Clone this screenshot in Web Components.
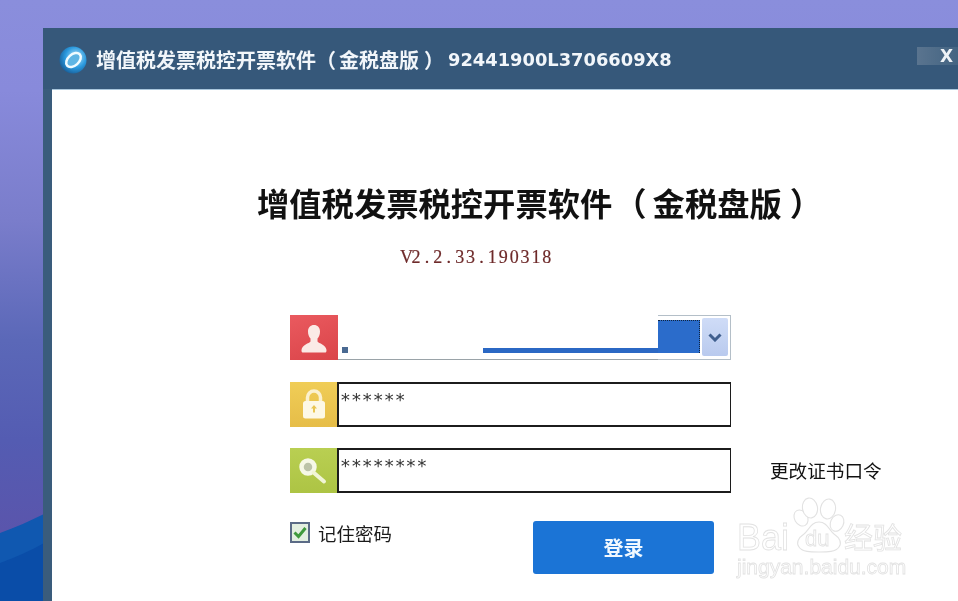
<!DOCTYPE html>
<html lang="zh">
<head>
<meta charset="utf-8">
<title>增值税发票税控开票软件</title>
<style>
  html, body { margin: 0; padding: 0; height: 100%; overflow: hidden; }
  body { font-family: "Noto Sans CJK SC", "Liberation Sans", sans-serif; }
</style>
</head>
<body>
<tax-desktop>
  <tax-window>
    <title-bar slot="bar"></title-bar>
    <login-panel>
      <login-field tone="red" kind="combo">
        <svg slot="icon" width="48" height="45" viewBox="0 0 48 45"><path fill="#fbeae6" d="M24 10c-3.500 0-6 2.600-6 6.500 0 3 1 5.500 2.500 7v3c-1.200 2-8.500 3-9 8.500-.1 1 .3 2.500 1 2.500h23c.7 0 1.100-1.500 1-2.500-.5-5.500-7.800-6.500-9-8.500v-3c1.500-1.500 2.500-4 2.500-7 0-3.900-2.500-6.500-6-6.500z"/></svg>
      </login-field>
      <login-field tone="yellow" value="******">
        <svg slot="icon" width="48" height="45" viewBox="0 0 48 45"><path fill="none" stroke="#fbf1cf" stroke-width="3.500" d="M17.500 20v-4.500a6.500 6.500 0 0 1 13 0V20"/><rect x="13" y="19" width="22" height="17.500" rx="2.500" fill="#fdf8e6"/><path fill="#e9c552" d="M24 23l3 3.600h-2v4h-2v-4h-2z"/></svg>
      </login-field>
      <login-field tone="green" value="********">
        <svg slot="icon" width="48" height="45" viewBox="0 0 48 45"><circle cx="18" cy="19" r="6.500" fill="#bcc3a8" stroke="#f6f8e6" stroke-width="4.500"/><path stroke="#f1f5d6" stroke-width="4" stroke-linecap="round" d="M23.500 24.500L34 33.500"/></svg>
        <span slot="after">更改证书口令</span>
      </login-field>
      <login-actions></login-actions>
    </login-panel>
    <baidu-mark slot="mark"></baidu-mark>
  </tax-window>
</tax-desktop>

<script>
class TaxDesktop extends HTMLElement {
  constructor() {
    super();
    this.attachShadow({ mode: 'open' });
    this.shadowRoot.innerHTML = `
      <style>
        :host {
          display: block;
          position: relative;
          width: 958px;
          height: 601px;
          overflow: hidden;
          background: linear-gradient(180deg, #8a8edc 0, #888adb 90px, #7a7dcb 220px, #5b68b8 340px, #545cb2 440px, #5a55ac 530px);
        }
        svg { position: absolute; left: 0; bottom: 0; }
      </style>
      <svg width="60" height="100" viewBox="0 0 60 100"><path fill="#1058b0" d="M0 32C16 26 30 20 44 13V100H0z"/><path fill="#0a4da8" d="M0 62C16 56 30 50 44 42V100H0z"/></svg>
      <slot></slot>
    `;
  }
}

class TaxWindow extends HTMLElement {
  constructor() {
    super();
    this.attachShadow({ mode: 'open' });
    this.shadowRoot.innerHTML = `
      <style>
        :host {
          display: block;
          position: absolute;
          left: 43px;
          top: 28px;
          width: 915px;
          height: 573px;
          box-sizing: border-box;
          border-left: 9px solid #3a5c7c;
          background: #fff;
        }
      </style>
      <slot name="bar"></slot>
      <slot></slot>
      <slot name="mark"></slot>
    `;
  }
}

class TitleBar extends HTMLElement {
  constructor() {
    super();
    this.attachShadow({ mode: 'open' });
    this.shadowRoot.innerHTML = `
      <style>
        :host {
          display: flex;
          align-items: center;
          height: 61px;
          margin-left: -9px;
          padding: 2px 0 0 15px;
          box-sizing: border-box;
          background: #36587a;
          color: #f2f6fa;
          font: 700 20px "Noto Sans CJK SC", sans-serif;
          filter: blur(.35px);
        }
        svg { flex: none; }
        .name { margin-left: 8px; white-space: nowrap; }
        .open { margin-right: 3px; }
        .shut { margin-left: 5px; }
        .code {
          margin-left: 4px;
          font: bold 17.850px "DejaVu Sans", sans-serif;
          white-space: nowrap;
        }
        .close {
          margin-left: auto;
          align-self: flex-start;
          margin-top: 17px;
          width: 41px;
          height: 18px;
          background: linear-gradient(90deg, #5a748f, #436482);
          color: #eef3f7;
          font: bold 17px/18px "DejaVu Sans", sans-serif;
          text-align: right;
          padding-right: 5px;
          box-sizing: border-box;
        }
      </style>
      <svg width="30" height="30" viewBox="0 0 30 30">
        <defs>
          <radialGradient id="orb" cx=".6" cy=".4" r=".7">
            <stop offset="0" stop-color="#bfe8fa"/>
            <stop offset=".55" stop-color="#2b9adf"/>
            <stop offset="1" stop-color="#14538c"/>
          </radialGradient>
        </defs>
        <circle cx="15" cy="15" r="13.500" fill="url(#orb)"/>
        <ellipse cx="15.500" cy="15" rx="8.500" ry="5.500" transform="rotate(-42 15.500 15)" fill="#5fb5e4" stroke="#f0fbff" stroke-width="2.500"/>
      </svg>
      <span class="name">增值税发票税控开票软件<span class="open">（</span>金税盘版<span class="shut">）</span></span>
      <span class="code">92441900L3706609X8</span>
      <span class="close">X</span>
    `;
  }
}

class LoginPanel extends HTMLElement {
  constructor() {
    super();
    this.attachShadow({ mode: 'open' });
    this.shadowRoot.innerHTML = `
      <style>
        :host {
          display: block;
          padding-top: 89px;
          border-top: 1px solid #a9c6dc;
          filter: blur(.3px);
        }
        h1 {
          margin: 0 0 0 205px;
          font: 700 32.300px/46px "Noto Sans CJK SC", sans-serif;
          color: #111;
          white-space: nowrap;
        }
        h1 .open { margin: 0 6px 0 2px; }
        h1 .shut { margin-left: 8px; }
        .version {
          margin: 20px 0 0 348px;
          font: 18px/24px "Liberation Serif", serif;
          letter-spacing: 1.900px;
          -webkit-text-stroke: .2px #6e2a2a;
          color: #6e2a2a;
          white-space: nowrap;
        }
        .version b { font-weight: 400; margin: 0 2.250px; }
        .version i { font-style: normal; letter-spacing: -1.500px; }
        .rows {
          display: flex;
          flex-direction: column;
          gap: 22px;
          margin: 46px 0 0 238px;
        }
        ::slotted(login-field:nth-child(3)) { margin-top: -1px; }
      </style>
      <h1>增值税发票税控开票软件<span class="open">（</span>金税盘版<span class="shut">）</span></h1>
      <div class="version"><i>V</i>2<b>.</b>2<b>.</b>33<b>.</b>190318</div>
      <div class="rows"><slot></slot></div>
    `;
  }
}

class LoginField extends HTMLElement {
  constructor() {
    super();
    this.attachShadow({ mode: 'open' });
  }

  connectedCallback() {
    const tones = {
      red: 'linear-gradient(160deg, #ea5a5f, #da4449)',
      yellow: 'linear-gradient(180deg, #f0cd57, #e6bd48)',
      green: 'linear-gradient(180deg, #b9cf52, #adc444)'
    };
    const tone = tones[this.getAttribute('tone')] || tones.red;
    const value = this.getAttribute('value') || '';
    const box = this.getAttribute('kind') === 'combo'
      ? `<div class="combo">
           <div class="plain"><i class="mark"></i><i class="bar"></i></div>
           <div class="pick">
             <div class="sel"></div>
             <div class="drop"><svg width="14" height="9" viewBox="0 0 14 9"><path fill="none" stroke="#3f5f8e" stroke-width="3" d="M1.500 1.500L7 7l5.500-5.500"/></svg></div>
           </div>
         </div>`
      : `<div class="input">${value}</div>`;

    this.shadowRoot.innerHTML = `
      <style>
        :host { display: flex; align-items: center; height: 45px; }
        .icon {
          flex: none;
          width: 48px;
          height: 45px;
          background: ${tone};
          display: flex;
        }
        .input {
          box-sizing: border-box;
          width: 394px;
          height: 45px;
          margin-left: -1px;
          border: 2px solid #1c1c1c;
          border-right-width: 1.500px;
          padding-left: 1px;
          font: 18px/31px "DejaVu Sans Mono", monospace;
          letter-spacing: .1px;
          color: #333;
          overflow: hidden;
        }
        .combo { display: flex; width: 393px; height: 45px; align-items: stretch; }
        .plain {
          box-sizing: border-box;
          width: 320px;
          border-bottom: 1px solid #9aa3a8;
          display: flex;
          align-items: flex-end;
          padding-bottom: 6px;
        }
        .mark { width: 6px; height: 6px; margin-left: 4px; background: #4a6a92; }
        .bar { width: 175px; height: 5px; margin-left: 135px; background: #2b68c4; }
        .pick {
          box-sizing: border-box;
          width: 73px;
          border: 1px solid #b4bfc8;
          border-left: 0;
          display: flex;
          padding: 4px 2px 1px 0;
        }
        .sel {
          width: 42px;
          height: 33px;
          background: #2b6ccb;
          border-top: 1px dotted #10243f;
          border-right: 1px dotted #10243f;
          box-sizing: border-box;
        }
        .drop {
          width: 26px;
          height: 38px;
          margin: -2px 0 0 2px;
          border-radius: 2px;
          background: linear-gradient(180deg, #cfdcf7, #b9caee);
          display: flex;
          align-items: center;
          justify-content: center;
        }
        .after {
          margin-left: 39px;
          margin-top: -2px;
          font-size: 18.600px;
          line-height: 26px;
          color: #111;
          white-space: nowrap;
        }
      </style>
      <div class="icon"><slot name="icon"></slot></div>
      ${box}
      <div class="after"><slot name="after"></slot></div>
    `;
  }
}

class LoginActions extends HTMLElement {
  constructor() {
    super();
    this.attachShadow({ mode: 'open' });
    this.shadowRoot.innerHTML = `
      <style>
        :host {
          display: flex;
          align-items: flex-start;
          margin-top: 6px;
        }
        label {
          display: flex;
          align-items: center;
          gap: 8px;
          height: 23px;
          font-size: 18.500px;
          color: #1a1a1a;
        }
        .check {
          box-sizing: border-box;
          width: 20px;
          height: 21px;
          border: 2px solid #5b6b86;
          background: #e3efe0;
          display: flex;
          align-items: center;
          justify-content: center;
        }
        button {
          margin-left: 141px;
          width: 181px;
          height: 53px;
          border: 0;
          border-radius: 3px;
          background: #1b74d6;
          color: #f0f8ff;
          font: 700 20px "Noto Sans CJK SC", sans-serif;
        }
      </style>
      <label>
        <span class="check"><svg width="14" height="13" viewBox="0 0 14 13"><path fill="none" stroke="#3f9a3c" stroke-width="3" d="M1.500 6.500L5.500 10.500L12.500 2"/></svg></span>
        <span>记住密码</span>
      </label>
      <button>登录</button>
    `;
  }
}

class BaiduMark extends HTMLElement {
  constructor() {
    super();
    this.attachShadow({ mode: 'open' });
    this.shadowRoot.innerHTML = `
      <style>
        :host {
          display: block;
          position: absolute;
          left: 683px;
          top: 468px;
          width: 175px;
          height: 86px;
          color: transparent;
          -webkit-text-stroke: .8px #e2e2e2;
          filter: blur(.3px);
        }
        span { position: absolute; white-space: nowrap; line-height: 1; }
        svg { position: absolute; left: 0; top: 0; }
        .bai { left: 2px; top: 24px; font: 36px/1 "Liberation Sans", sans-serif; }
        .du { left: 70px; top: 32px; font: 22px/1 "Liberation Sans", sans-serif; }
        .zh { left: 109px; top: 26px; font: 29px/1 "Noto Sans CJK SC", sans-serif; }
        .url { left: 2px; top: 60px; font: 21px/1 "Liberation Sans", sans-serif; }
      </style>
      <svg width="175" height="70" viewBox="0 0 175 70" fill="#fff" stroke="#e2e2e2" stroke-width="1.100">
        <ellipse cx="66" cy="22" rx="6.500" ry="8.500" transform="rotate(-30 66 22)"/>
        <ellipse cx="75" cy="12" rx="7.500" ry="10" transform="rotate(-10 75 12)"/>
        <ellipse cx="93" cy="13" rx="7.500" ry="10" transform="rotate(10 93 13)"/>
        <ellipse cx="102" cy="27" rx="6.500" ry="8.500" transform="rotate(25 102 27)"/>
        <path d="M84 26c-8 0-10 8-15 12-6 4-8 9-5 13 3 5 12 5 20 5s17 0 20-5c3-4 1-9-5-13-5-4-7-12-15-12z"/>
      </svg>
      <span class="bai">Bai</span>
      <span class="du">du</span>
      <span class="zh">经验</span>
      <span class="url">jingyan.baidu.com</span>
    `;
  }
}

customElements.define('tax-desktop', TaxDesktop);
customElements.define('tax-window', TaxWindow);
customElements.define('title-bar', TitleBar);
customElements.define('login-panel', LoginPanel);
customElements.define('login-field', LoginField);
customElements.define('login-actions', LoginActions);
customElements.define('baidu-mark', BaiduMark);
</script>
</body>
</html>
